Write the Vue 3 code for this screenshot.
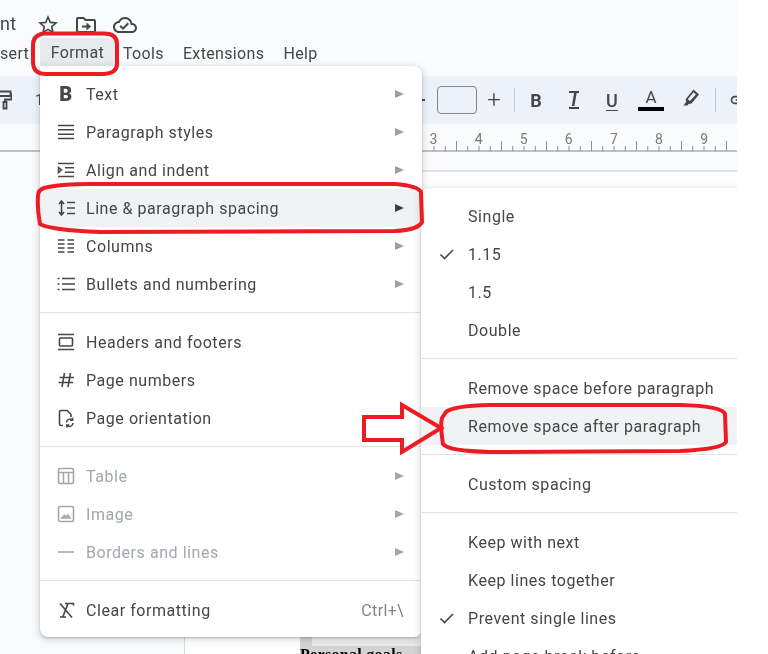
<script setup>
const ic = {
  para: 'M1 2.5H17M1 6.8H17M1 11.2H17M1 15.5H17',
  align: 'M1 2.5H17M8 6.8H17M8 11.2H17M1 15.5H17M1.5 6.5L4.5 9L1.5 11.5Z',
  line: 'M4.5 2V16M2 5L4.5 2L7 5M2 13L4.5 16L7 13M10 3.5H18M10 9H18M10 14.5H18',
  cols: 'M1 3H7.5M10.5 3H17M1 7H7.5M10.5 7H17M1 11H7.5M10.5 11H17M1 15H7.5M10.5 15H17',
  bullets: 'M0.5 3.5H2.5M0.5 9H2.5M0.5 14.5H2.5M5 3.5H18M5 9H18M5 14.5H18',
  head: 'M1 1.5H17M1 16.5H17M3.5 5H14.5A1 1 0 0 1 15.5 6V12A1 1 0 0 1 14.5 13H3.5A1 1 0 0 1 2.5 12V6A1 1 0 0 1 3.5 5Z',
  hash: 'M7.5 2L5 16M13.5 2L11 16M2.5 6.5H17M1.5 11.5H16',
  orient: 'M6 16.5H4A1.5 1.5 0 0 1 2.5 15V3A1.5 1.5 0 0 1 4 1.5H10L14 5.5V8M9.5 13.5A3.4 3.4 0 0 1 15.2 11M16 14A3.4 3.4 0 0 1 10.3 16.5M15.6 8.8V11.3H13.2M9.8 18.6V16.1H12.2',
  table: 'M3 1.5H15A1.5 1.5 0 0 1 16.5 3V15A1.5 1.5 0 0 1 15 16.5H3A1.5 1.5 0 0 1 1.5 15V3A1.5 1.5 0 0 1 3 1.5ZM1.5 5.5H16.5M6.5 5.5V16.5M11.5 5.5V16.5',
  image: 'M3 1.5H15A1.5 1.5 0 0 1 16.5 3V15A1.5 1.5 0 0 1 15 16.5H3A1.5 1.5 0 0 1 1.5 15V3A1.5 1.5 0 0 1 3 1.5ZM5 13L7.5 10.5L9 12L10.8 10L13 13Z',
  border: 'M1 9H17',
  clear: 'M3 2.5L15 16.5M8 2.5H16.5V4.5M11 2.5L6 15.5M3 16H9',
}
const menu = [
  [
    { t: 'Text', b: 'B', arrow: true },
    { t: 'Paragraph styles', i: 'para', arrow: true },
    { t: 'Align and indent', i: 'align', arrow: true },
    { t: 'Line & paragraph spacing', i: 'line', arrow: true, active: true },
    { t: 'Columns', i: 'cols', arrow: true },
    { t: 'Bullets and numbering', i: 'bullets', arrow: true },
  ],
  [
    { t: 'Headers and footers', i: 'head' },
    { t: 'Page numbers', i: 'hash' },
    { t: 'Page orientation', i: 'orient' },
  ],
  [
    { t: 'Table', i: 'table', arrow: true, off: true },
    { t: 'Image', i: 'image', arrow: true, off: true },
    { t: 'Borders and lines', i: 'border', arrow: true, off: true },
  ],
  [{ t: 'Clear formatting', i: 'clear', key: 'Ctrl+\\' }],
]
const sub = [
  [{ t: 'Single' }, { t: '1.15', c: true }, { t: '1.5' }, { t: 'Double' }],
  [{ t: 'Remove space before paragraph' }, { t: 'Remove space after paragraph', active: true }],
  [{ t: 'Custom spacing' }],
  [{ t: 'Keep with next' }, { t: 'Keep lines together' }, { t: 'Prevent single lines', c: true }, { t: 'Add page break before' }],
]
const ticks = Array.from({ length: 28 }, (_, i) => ({ x: 434 + i * 11.25, long: i % 4 === 2 }))
const nums = [3, 4, 5, 6, 7, 8, 9].map((n, i) => ({ n, x: 433.5 + i * 45.1 }))
</script>

<template>
  <div class="shot">
    <div class="title">
      <span class="name">nt</span>
      <svg class="t-star" width="24" height="24" viewBox="0 0 24 24"><path d="M22 9.24l-7.19-.62L12 2 9.19 8.63 2 9.24l5.46 4.73L5.82 21 12 17.27 18.18 21l-1.63-7.03L22 9.24zM12 15.4l-3.76 2.27 1-4.28-3.32-2.88 4.38-.38L12 6.1l1.71 4.04 4.38.38-3.32 2.88 1 4.28L12 15.4z"/></svg>
      <svg class="t-move" width="24" height="24" viewBox="0 0 24 24"><path d="M20 6h-8l-2-2H4c-1.1 0-2 .9-2 2v12c0 1.1.9 2 2 2h16c1.1 0 2-.9 2-2V8c0-1.1-.9-2-2-2zm0 12H4V6h5.17l2 2H20v10zM12.5 17.5l4.5-4-4.500-4v3H8v2h4.500z"/></svg>
      <svg class="t-cloud" width="24" height="24" viewBox="0 0 24 24"><path d="M19.35 10.04C18.67 6.59 15.64 4 12 4 9.11 4 6.6 5.64 5.35 8.040 2.340 8.360 0 10.910 0 14c0 3.310 2.690 6 6 6h13c2.760 0 5-2.240 5-5 0-2.640-2.050-4.780-4.650-4.960zM19 18H6c-2.210 0-4-1.790-4-4 0-2.050 1.530-3.760 3.560-3.970l1.070-.11.5-.95C8.080 7.140 9.940 6 12 6c2.620 0 4.880 1.860 5.390 4.430l.3 1.500 1.530.11c1.560.1 2.780 1.410 2.780 2.960 0 1.650-1.350 3-3 3zM10 14.200l-2.090-2.090L6.500 13.500 10 17l6.010-6.010-1.410-1.410z"/></svg>
    </div>

    <div class="menubar">
      <span class="mb-insert">sert</span>
      <span class="mb-format">Format</span>
      <span class="mb-item m1">Tools</span>
      <span class="mb-item m2">Extensions</span>
      <span class="mb-item m2">Help</span>
    </div>

    <div class="toolbar">
      <div class="tb-left">
        <svg class="paint" width="12" height="20" viewBox="0 0 12 20"><path d="M-4 1.500H10.500V6H-4M10.500 3.800H11.500V9.500H5V12M3.500 12H6.500V18.500H3.500Z"/></svg>
        <span class="tb-one">1</span>
      </div>
      <span class="minus"></span>
      <span class="size-box"></span>
      <span class="cell plus">+</span>
      <span class="sep s1"></span>
      <span class="cell bold">B</span>
      <span class="cell ital"><span class="ul-i">I</span></span>
      <span class="cell under">U</span>
      <span class="cell color">A<i class="color-bar"></i></span>
      <span class="cell pen">
        <svg width="24" height="24" viewBox="0 0 24 24"><path d="M14.500 3.500L20 8.500 12.500 17.500 9.500 18 8.500 19.500H4.500L7 16 6.800 13zM14.600 6.300L8.800 13.200 10.900 15.100 16.900 8.400z"/></svg>
      </span>
      <span class="sep s2"></span>
      <svg class="link" width="20" height="20" viewBox="0 0 24 24"><path d="M3.900 12c0-1.710 1.390-3.100 3.100-3.100h4V7H7c-2.760 0-5 2.240-5 5s2.240 5 5 5h4v-1.900H7c-1.710 0-3.100-1.390-3.100-3.100zM8 13h8v-2H8v2z"/></svg>
    </div>

    <div class="ruler">
      <svg width="737" height="46" viewBox="0 0 737 46">
        <line x1="0" x2="737" y1="27" y2="27" class="base"/>
        <line v-for="t in ticks" :key="t.x" :x1="t.x" :x2="t.x" :y1="t.long ? 17 : 22" y2="27" class="tick"/>
        <text v-for="l in nums" :key="l.n" :x="l.x" y="20" class="rnum">{{ l.n }}</text>
      </svg>
      <div class="ruler-edge"></div>
    </div>

    <div class="doc">
      <div class="gutter"></div>
      <div class="page">
        <div class="selection">
          <div class="sel-top"></div>
          <div class="sel-text">Personal goals</div>
        </div>
      </div>
    </div>

    <div class="menu">
      <template v-for="(g, gi) in menu" :key="gi">
        <div v-if="gi" class="divider"></div>
        <div v-for="r in g" :key="r.t" class="row" :class="{ off: r.off, active: r.active }">
          <span class="ico">
            <b v-if="r.b" class="b-ico">{{ r.b }}</b>
            <svg v-else width="18" height="18" viewBox="0 0 18 18"><path :d="ic[r.i]"/></svg>
          </span>
          <span class="label">{{ r.t }}</span>
          <span v-if="r.key" class="key">{{ r.key }}</span>
          <i v-if="r.arrow" class="tri"></i>
        </div>
      </template>
    </div>

    <div class="submenu">
      <template v-for="(g, gi) in sub" :key="gi">
        <div v-if="gi" class="divider"></div>
        <div v-for="r in g" :key="r.t" class="srow" :class="{ active: r.active }">
          <svg v-if="r.c" class="check" width="18" height="18" viewBox="0 0 18 18"><path d="M2.500 9.500L6.500 13.500L15 5"/></svg>
          <span class="label">{{ r.t }}</span>
        </div>
      </template>
    </div>

    <svg class="marks" width="737" height="654" viewBox="0 0 737 654">
      <path d="M44 33.500H104Q117 33.500 117 44V64Q117 73 104 74H46Q33 74 33 62V45Q33 35 44 33.500Z"/>
      <path d="M44 188Q60 184 90 184L395 184Q418 186 421 192L422 222Q418 230 395 231L100 232Q50 230 40 224Q37 208 38 196Q38 190 44 188Z"/>
      <path d="M446 412Q452 406 490 405L680 405Q722 406 725 414L726 442Q722 449 680 451L490 452Q448 451 443 444Q440 425 442 418Z"/>
      <path d="M364 417H402V405L441 428L402 452V440H364Z"/>
    </svg>
  </div>
</template>

<style>
html, body { background: #fff; margin: 0; }
</style>

<style scoped>
.shot {
  position: relative;
  width: 737px;
  height: 654px;
  overflow: hidden;
  background: #f9fbfd;
  font-family: Roboto, "Liberation Sans", sans-serif;
  color: #444746;
  filter: blur(0.4px);
}
.title { height: 38px; display: flex; align-items: center; box-sizing: border-box; }
.name { font-size: 18px; width: 36px; margin-top: 8px; letter-spacing: .2px; }
.title svg { fill: #444746; margin-top: 12px; flex: none; }
.t-star { margin-left: 0; }
.t-move { margin-left: 14px; }
.t-cloud { margin-left: 15px; }
.menubar { height: 28px; display: flex; align-items: center; font-size: 16px; letter-spacing: .35px; padding-top: 2px; box-sizing: border-box; margin-bottom: 10px; }
.mb-insert { width: 40px; overflow: hidden; }
.mb-format { width: 75px; height: 28px; margin-top: -2px; line-height: 30px; text-align: center; background: #e8eaed; border-radius: 4px 4px 0 0; padding-top: 0; }
.m1 { margin-left: 8px; }
.m2 { margin-left: 19px; }
.toolbar { height: 48px; background: #edf2fa; display: flex; align-items: center; white-space: nowrap; }
.toolbar > * { flex: none; }
.tb-left { width: 420px; display: flex; align-items: center; }
.paint { fill: none; stroke: #444746; stroke-width: 1.800; }
.tb-one { font-size: 15px; margin-left: 23px; }
.minus { width: 3px; height: 2px; background: #444746; margin-left: 2px; }
.size-box { width: 38px; height: 26px; border: 1px solid #80868b; border-radius: 4px; margin-left: 12px; }
.cell { display: flex; align-items: center; justify-content: center; height: 48px; position: relative; }
.plus { width: 24px; margin-left: 5px; font-size: 24px; font-weight: 300; }
.sep { width: 1px; height: 24px; background: #c7c7c7; }
.s1 { margin-left: 8px; }
.s2 { margin-left: 4px; }
.bold { width: 38px; margin-left: 2px; font-weight: 700; font-size: 18px; }
.ital { width: 38px; }
.ul-i { font-style: italic; font-weight: 700; font-size: 18px; border-top: 2px solid #444746; border-bottom: 2px solid #444746; line-height: 14px; padding: 0 2px; }
.under { width: 38px; font-weight: 500; font-size: 18px; text-decoration: underline; text-underline-offset: 3px; }
.color { width: 40px; font-size: 17px; padding-bottom: 6px; box-sizing: border-box; }
.color-bar { position: absolute; left: 7px; right: 7px; bottom: 13px; height: 4px; background: #000; }
.pen { width: 40px; }
.pen svg { fill: #444746; fill-rule: evenodd; margin-top: -4px; }
.link { margin-left: 13px; fill: #444746; }
.ruler { height: 48px; box-sizing: border-box; }
.ruler svg { display: block; }
.ruler-edge { height: 2px; margin-left: 185px; background: #e3e3e3; }
.base { stroke: #aeaeae; stroke-width: 1.500; }
.tick { stroke: #8f8f8f; stroke-width: 1; }
.rnum { font-size: 14px; fill: #7d7a76; text-anchor: middle; font-family: Roboto, sans-serif; }
.doc { display: flex; height: 482px; }
.gutter { width: 185px; border-right: 1px solid #dadce0; box-sizing: border-box; }
.page { flex: 1; background: #fff; padding: 465px 0 0 115px; box-sizing: border-box; overflow: hidden; }
.selection { height: 17px; background: #d4d4d4; overflow: hidden; }
.sel-top { height: 9px; background: #ececec; margin-left: 12px; }
.sel-text { font-family: "Liberation Serif", serif; font-weight: 700; font-size: 16px; line-height: 18px; color: #000; letter-spacing: .3px; }

.menu {
  position: absolute; left: 40px; top: 66px; width: 382px; box-sizing: border-box;
  padding: 9px 0 8px; background: #fff; border-radius: 0 8px 8px 8px;
  box-shadow: 0 2px 6px 2px rgba(60,64,67,.15), 0 1px 2px rgba(60,64,67,.3);
}
.divider { height: 1px; background: #e3e3e3; margin: 9px 0 10px; }
.row { height: 38px; display: flex; align-items: center; padding: 0 18px 0 17px; font-size: 16px; letter-spacing: .55px; position: relative; }
.row.active, .srow.active { background: #f0f2f4; }
.ico { width: 18px; height: 18px; margin-right: 11px; display: flex; align-items: center; justify-content: center; flex: none; }
.ico svg { fill: none; stroke: currentColor; stroke-width: 1.600; overflow: visible; }
.b-ico { font-size: 20px; font-weight: 900; }
.key { margin-left: auto; color: #80868b; font-size: 16px; letter-spacing: .35px; }
.tri { margin-left: auto; width: 0; height: 0; border-left: 9px solid #9aa0a6; border-top: 4.500px solid transparent; border-bottom: 4.500px solid transparent; }
.row.active .tri { border-left-color: #3c4043; }
.row.off { color: #a2a7ad; }
.row.off .tri { border-left-color: #a2a7ad; }

.submenu {
  position: absolute; left: 421px; top: 188px; width: 340px; box-sizing: border-box;
  padding: 9px 0 8px; background: #fff; border-radius: 8px;
  box-shadow: 0 2px 6px 2px rgba(60,64,67,.15), 0 1px 2px rgba(60,64,67,.3);
}
.srow { height: 38px; display: flex; align-items: center; padding-left: 47px; font-size: 16px; letter-spacing: .55px; position: relative; }
.check { position: absolute; left: 17px; top: 10px; fill: none; stroke: #444746; stroke-width: 1.600; }

.marks { position: absolute; left: 0; top: 0; fill: none; stroke: #ed1c24; stroke-width: 4; stroke-linejoin: miter; }
</style>
